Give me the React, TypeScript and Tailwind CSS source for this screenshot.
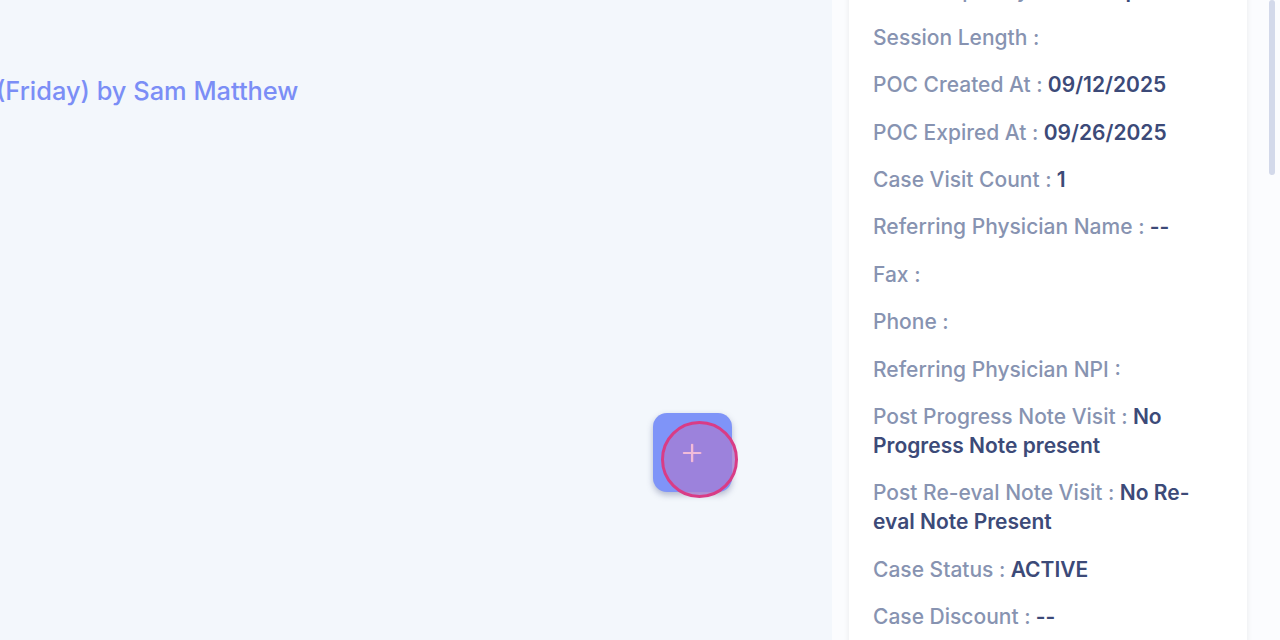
import { Plus } from "lucide-react";

const rows: { label: string; value?: string }[] = [
  { label: "Visit Frequency :", value: "2 times per week" },
  { label: "Session Length :" },
  { label: "POC Created At :", value: "09/12/2025" },
  { label: "POC Expired At :", value: "09/26/2025" },
  { label: "Case Visit Count :", value: "1" },
  { label: "Referring Physician Name :", value: "--" },
  { label: "Fax :" },
  { label: "Phone :" },
  { label: "Referring Physician NPI :" },
  { label: "Post Progress Note Visit :", value: "No Progress Note present" },
  { label: "Post Re-eval Note Visit :", value: "No Re-eval Note Present" },
  { label: "Case Status :", value: "ACTIVE" },
  { label: "Case Discount :", value: "--" },
];

export default function App() {
  return (
    <div
      className="flex h-[640px] w-[1280px] overflow-hidden bg-[#f3f7fc]"
      style={{ fontFamily: "Inter, 'Noto Sans', sans-serif" }}
    >
      <main className="relative w-[832px] shrink-0">
        <p className="ml-[-4px] mt-[72px] text-[25.4px] font-medium text-[#7b8ef6]">
          (Friday) by Sam Matthew
        </p>

        <button className="absolute left-[653px] top-[413px] flex h-[79px] w-[79px] items-center justify-center rounded-[14px] bg-[#7f94f8] shadow-[0_3px_6px_rgba(60,70,120,0.35)]">
          <Plus className="h-7 w-7 text-[#f3b9da]" strokeWidth={1.8} />
        </button>
        {/* click indicator */}
        <div className="pointer-events-none absolute left-[661px] top-[421px] h-[77px] w-[77px] rounded-full border-[3px] border-[#d93c86] bg-[#a57cd3]/75" />
        <Plus
          className="pointer-events-none absolute left-[678px] top-[439px] h-7 w-7 text-[#f1bcd9]"
          strokeWidth={1.8}
        />
      </main>

      <aside className="relative flex-1 bg-[#fbfcfe]">
        <div className="ml-[17px] mt-[-40px] w-[398px] bg-white px-6 pb-10 pt-[15.5px] shadow-[0_0_6px_rgba(0,0,0,0.08)]">
          <div className="flex flex-col gap-[18.4px]">
            {rows.map((r) => (
              <p key={r.label} className="text-[21px] font-medium leading-[29px] text-[#8793b1]">
                {r.label}
                {r.value ? (
                  <span className="font-[560] text-[#3c4a78]"> {r.value}</span>
                ) : null}
              </p>
            ))}
          </div>
        </div>
        <div className="absolute right-[5px] top-0 h-[175px] w-[6px] rounded-full bg-[#d3d9ea]" />
      </aside>
    </div>
  );
}
